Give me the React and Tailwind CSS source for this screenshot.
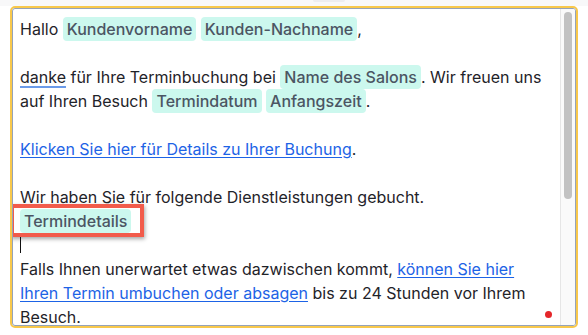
import React from "react";

function Chip({ children }) {
  return (
    <span className="inline-block rounded-[4px] bg-[#ccf8ee] px-[4px] font-medium text-[#4b5563]">
      {children}
    </span>
  );
}

function Link({ children }) {
  return <a className="text-[#1d63e6] underline underline-offset-2">{children}</a>;
}

export default function App() {
  return (
    <div className="h-[335px] w-[588px] overflow-hidden bg-white font-['Inter',sans-serif] text-[16px] leading-6 text-[#1f2329]">
      {/* toolbar edge peeking from above */}
      <div className="flex h-[6px] bg-[#f8f8f9] pl-[313px]">
        <div className="h-[2px] w-[32px] rounded-b-[2px] bg-[#ededf0]" />
      </div>

      <div className="ml-[10px] h-[322px] w-[568px] rounded-[5px] border-2 border-[#f8c84b]">
        <div className="flex h-full overflow-hidden rounded-[3px] border border-[#95a3b8]">
          {/* editor body */}
          <div className="relative flex-1 overflow-hidden pl-[7px] pr-[12px] pt-[8px]">
            <p>
              Hallo <Chip>Kundenvorname</Chip> <Chip>Kunden-Nachname</Chip>,
            </p>
            <p>
              <br />
            </p>
            <p>
              <span className="underline decoration-[#6b9bea] decoration-2 underline-offset-[3px]">danke</span> für Ihre
              Terminbuchung bei <Chip>Name des Salons</Chip>. Wir freuen uns auf Ihren Besuch{" "}
              <Chip>Termindatum</Chip> <Chip>Anfangszeit</Chip>.
            </p>
            <p>
              <br />
            </p>
            <p>
              <Link>Klicken Sie hier für Details zu Ihrer Buchung</Link>.
            </p>
            <p>
              <br />
            </p>
            <p>Wir haben Sie für folgende Dienstleistungen gebucht.</p>
            <p>
              <span className="relative inline-block">
                <Chip>Termindetails</Chip>
                {/* highlight annotation */}
                <span className="absolute -bottom-[4px] -left-[10px] -right-[13px] -top-[5px] border-4 border-[#f25b4b] shadow-[1px_2px_4px_rgba(0,0,0,0.35)]" />
              </span>
            </p>
            <p className="flex h-6 items-center">
              <span className="h-[16px] w-px bg-[#111]" />
            </p>
            <p>
              Falls Ihnen unerwartet etwas dazwischen kommt,{" "}
              <Link>können Sie hier Ihren Termin umbuchen oder absagen</Link> bis zu 24 Stunden vor Ihrem Besuch.
            </p>

            <span className="absolute bottom-[7px] right-[8px] h-[7px] w-[7px] rounded-full bg-[#e5262a]" />
          </div>

          {/* scrollbar */}
          <div className="w-[15px] border-l border-[#e6e6e6] bg-[#fafafa] pl-[3px] pt-[3px]">
            <div className="h-[187px] w-[8px] rounded-full bg-[#c2c2c2]" />
          </div>
        </div>
      </div>
    </div>
  );
}
